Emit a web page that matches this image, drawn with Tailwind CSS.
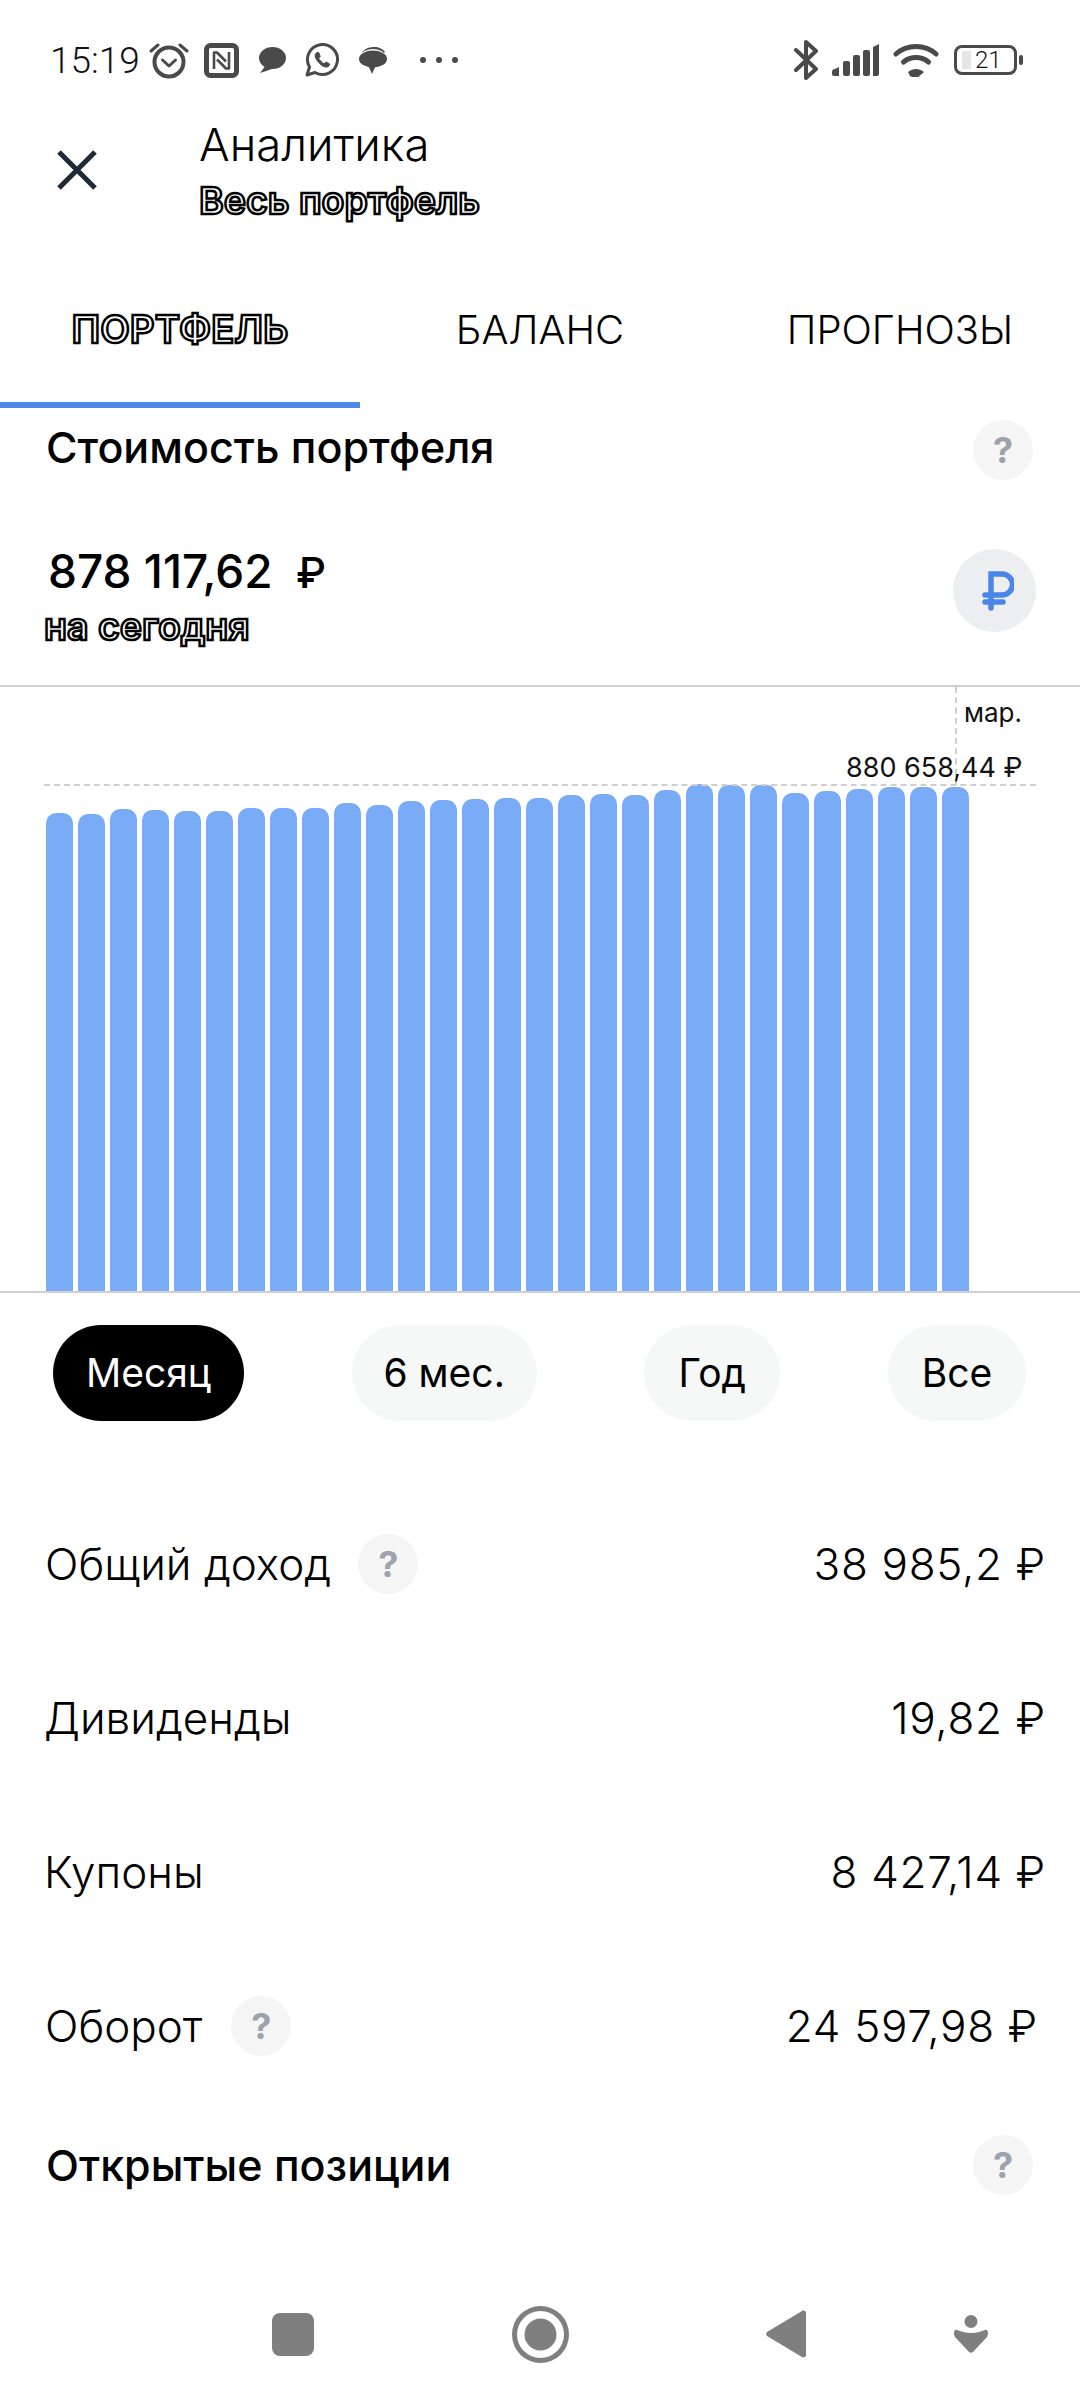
<!DOCTYPE html>
<html lang="ru">
<head>
<meta charset="utf-8">
<script src="https://cdn.jsdelivr.net/npm/@tailwindcss/browser@4"></script>
</head>
<body class="bg-white">
<div class="w-[1080px] h-[2400px] bg-white flex flex-col overflow-hidden font-['Inter','Noto_Sans',sans-serif] text-black">

  <!-- status bar -->
  <div class="h-[120px] shrink-0 flex items-center pl-[50px] text-[#4a4a4a]">
    <span class="w-[85px] text-[37px] leading-none font-light text-[#111] font-['Roboto',sans-serif]">15:19</span>
    <svg class="ml-[14px] w-[40px] h-[38px]" viewBox="0 0 40 38" fill="none" stroke="currentColor"><circle cx="20" cy="21" r="14.5" stroke-width="4"/><path d="M13.5 19l6.500 6 6.500-6" stroke-width="3" stroke-linecap="round" stroke-linejoin="round"/><path d="M2 10l7-6M38 10l-7-6" stroke-width="3" stroke-linecap="round"/></svg>
    <svg class="ml-[15px] w-[35px] h-[35px]" viewBox="0 0 35 35" fill="none" stroke="currentColor"><rect x="2.500" y="2.500" width="30" height="30" rx="4" stroke-width="5"/><path d="M10 26V9.500h3l9 9M25 9v16.500h-3l-9-9" stroke-width="2.600" stroke-linejoin="round"/></svg>
    <svg class="ml-[19px] w-[28px] h-[28px]" viewBox="0 0 28 28" fill="currentColor"><ellipse cx="14.500" cy="12" rx="13.500" ry="11"/><path d="M8 19l-6 8 12-4z"/></svg>
    <svg class="ml-[19px] w-[34px] h-[34px]" viewBox="0 0 34 34" fill="none" stroke="currentColor"><path d="M2 32l2.500-8A15 15 0 1 1 10 29.500z" stroke-width="3" stroke-linejoin="round"/><path d="M12 9.500c-2.500 1.500-2.500 4.500.500 8.500s6.500 6.500 9.500 6c2-.5 3-2 2.500-3.200l-3.500-1.800-1.800 1.800c-2-.8-4.500-3.300-5.500-5.600l1.500-1.900-1.500-3.800z" fill="currentColor"/></svg>
    <svg class="ml-[20px] w-[28px] h-[28px]" viewBox="0 0 28 28" fill="currentColor"><path d="M3 7c2-4 7-6 12-6s9 2 11 5l-1 1C22 4 18 3 14 3S6 4 3 7z"/><ellipse cx="14" cy="13" rx="14" ry="8.500"/><path d="M9 19l8 0-4 9z"/></svg>
    <div class="ml-[33px] flex gap-[10px]"><span class="w-[6px] h-[6px] rounded-full bg-[#4a4a4a]"></span><span class="w-[6px] h-[6px] rounded-full bg-[#4a4a4a]"></span><span class="w-[6px] h-[6px] rounded-full bg-[#4a4a4a]"></span></div>

    <svg class="ml-auto w-[24px] h-[40px]" viewBox="0 0 24 40" fill="none" stroke="currentColor" stroke-width="4" stroke-linecap="round" stroke-linejoin="round"><path d="M2 10l20 19-10 9V2l10 9L2 30"/></svg>
    <svg class="ml-[14px] w-[48px] h-[32px]" viewBox="0 0 48 32" fill="currentColor"><path d="M0 28a3 3 0 0 1 3-3l4-2v9H2a2 2 0 0 1-2-2z"/><rect x="11" y="17" width="7" height="15" rx="2"/><rect x="21" y="11" width="7" height="21" rx="2"/><rect x="31" y="6" width="7" height="26" rx="2"/><path d="M41 3l6-3v30a2 2 0 0 1-2 2h-4z"/></svg>
    <svg class="ml-[13px] w-[46px] h-[34px]" viewBox="0 0 46 34" fill="none" stroke="currentColor" stroke-width="5" stroke-linecap="round"><path d="M3 11C14 1 32 1 43 11"/><path d="M10.500 19c7-6 18-6 25 0"/><path d="M17 33l-2-4c5-4 11-4 16 0l-8 7z" fill="currentColor" stroke="none"/></svg>
    <div class="ml-[15px] w-[63px] h-[30px] rounded-[8px] border-[3px] border-[#4a4a4a] flex items-center pl-[5px]">
      <span class="w-[9px] h-[18px] bg-[#e5e5e5]"></span>
      <span class="ml-[4px] text-[24px] leading-none font-light text-[#111] font-['Roboto',sans-serif]">21</span>
    </div>
    <span class="ml-[2px] mr-[57px] w-[4px] h-[10px] rounded-[2px] bg-[#4a4a4a]"></span>
  </div>

  <!-- header -->
  <div class="h-[120px] shrink-0 flex">
    <svg class="ml-[57px] mt-[30px] w-[40px] h-[40px] text-[#1f2937]" viewBox="0 0 40 40" fill="none" stroke="currentColor" stroke-width="5"><path d="M2 2l36 36M38 2L2 38"/></svg>
    <div class="ml-[102px] flex flex-col">
      <span class="text-[45.500px] leading-[50px] font-light">Аналитика</span>
      <span class="mt-[9px] text-[37.500px] leading-[44px] font-semibold text-white [-webkit-text-stroke:2.500px_black]">Весь портфель</span>
    </div>
  </div>

  <!-- tabs -->
  <div class="h-[168px] shrink-0 grid grid-cols-3 text-[40px]">
    <div class="flex items-center justify-center pt-[18px] border-b-[6px] border-[#4f8ae6]"><span class="text-[38.500px] font-semibold text-white [-webkit-text-stroke:2.500px_black]">ПОРТФЕЛЬ</span></div>
    <div class="flex items-center justify-center pt-[18px] border-b-[6px] border-transparent font-light">БАЛАНС</div>
    <div class="flex items-center justify-center pt-[18px] border-b-[6px] border-transparent font-light">ПРОГНОЗЫ</div>
  </div>

  <!-- title -->
  <div class="h-[78px] shrink-0 flex items-center justify-between pl-[46px] pr-[47px]">
    <span class="text-[43px] leading-none font-medium">Стоимость портфеля</span>
    <span class="mt-[6px] w-[60px] h-[60px] rounded-full bg-[#f5f5f6] flex items-center justify-center text-[36px] font-bold text-[#9ca3af]">?</span>
  </div>

  <!-- value -->
  <div class="h-[199px] shrink-0 flex justify-between pr-[44px]">
    <div class="flex flex-col pl-[48px] pt-[60px]">
      <span class="text-[46px] leading-[50px] font-medium">878 117,62&nbsp;<span class="text-[42px]"> ₽</span></span>
      <span class="mt-[9px] -ml-[4px] text-[37.500px] leading-[40px] font-semibold text-white [-webkit-text-stroke:2.500px_black]">на сегодня</span>
    </div>
    <span class="mt-[63px] w-[83px] h-[83px] rounded-full bg-[#eceef0] flex items-center justify-center">
      <svg class="w-[32px] h-[40px] ml-[7px]" viewBox="0 0 32 40" fill="none" stroke="#4a86e8" stroke-width="5.500" stroke-linecap="round"><path d="M9 37V3h11a10.500 10.500 0 0 1 0 21H3M3 31h18"/></svg>
    </span>
  </div>

  <!-- chart -->
  <div class="relative h-[608px] shrink-0 border-y-2 border-[#d0d0d0] flex items-end gap-[5px] pl-[46px]">
    <div class="w-[27px] rounded-t-[10px] bg-[#7aabf7]" style="height:478px"></div>
    <div class="w-[27px] rounded-t-[10px] bg-[#7aabf7]" style="height:477px"></div>
    <div class="w-[27px] rounded-t-[10px] bg-[#7aabf7]" style="height:482px"></div>
    <div class="w-[27px] rounded-t-[10px] bg-[#7aabf7]" style="height:481px"></div>
    <div class="w-[27px] rounded-t-[10px] bg-[#7aabf7]" style="height:480px"></div>
    <div class="w-[27px] rounded-t-[10px] bg-[#7aabf7]" style="height:480px"></div>
    <div class="w-[27px] rounded-t-[10px] bg-[#7aabf7]" style="height:483px"></div>
    <div class="w-[27px] rounded-t-[10px] bg-[#7aabf7]" style="height:483px"></div>
    <div class="w-[27px] rounded-t-[10px] bg-[#7aabf7]" style="height:483px"></div>
    <div class="w-[27px] rounded-t-[10px] bg-[#7aabf7]" style="height:488px"></div>
    <div class="w-[27px] rounded-t-[10px] bg-[#7aabf7]" style="height:486px"></div>
    <div class="w-[27px] rounded-t-[10px] bg-[#7aabf7]" style="height:490px"></div>
    <div class="w-[27px] rounded-t-[10px] bg-[#7aabf7]" style="height:491px"></div>
    <div class="w-[27px] rounded-t-[10px] bg-[#7aabf7]" style="height:492px"></div>
    <div class="w-[27px] rounded-t-[10px] bg-[#7aabf7]" style="height:493px"></div>
    <div class="w-[27px] rounded-t-[10px] bg-[#7aabf7]" style="height:493px"></div>
    <div class="w-[27px] rounded-t-[10px] bg-[#7aabf7]" style="height:496px"></div>
    <div class="w-[27px] rounded-t-[10px] bg-[#7aabf7]" style="height:497px"></div>
    <div class="w-[27px] rounded-t-[10px] bg-[#7aabf7]" style="height:496px"></div>
    <div class="w-[27px] rounded-t-[10px] bg-[#7aabf7]" style="height:501px"></div>
    <div class="w-[27px] rounded-t-[10px] bg-[#7aabf7]" style="height:507px"></div>
    <div class="w-[27px] rounded-t-[10px] bg-[#7aabf7]" style="height:506px"></div>
    <div class="w-[27px] rounded-t-[10px] bg-[#7aabf7]" style="height:506px"></div>
    <div class="w-[27px] rounded-t-[10px] bg-[#7aabf7]" style="height:498px"></div>
    <div class="w-[27px] rounded-t-[10px] bg-[#7aabf7]" style="height:500px"></div>
    <div class="w-[27px] rounded-t-[10px] bg-[#7aabf7]" style="height:502px"></div>
    <div class="w-[27px] rounded-t-[10px] bg-[#7aabf7]" style="height:504px"></div>
    <div class="w-[27px] rounded-t-[10px] bg-[#7aabf7]" style="height:504px"></div>
    <div class="w-[27px] rounded-t-[10px] bg-[#7aabf7]" style="height:504px"></div>
    <span class="absolute left-[44px] top-[97px] w-[992px] border-t-2 border-dashed border-[#cfcfcf]"></span>
    <span class="absolute left-[955px] top-0 h-[98px] border-l-2 border-dashed border-[#cfcfcf]"></span>
    <span class="absolute left-[964px] top-[11px] text-[26px] leading-[30px] text-[#111]">мар.</span>
    <span class="absolute left-[846px] top-[66px] text-[27px] leading-[30px] text-[#111]">880 658,44 ₽</span>
  </div>

  <!-- period chips -->
  <div class="mt-[32px] shrink-0 flex justify-between pl-[53px] pr-[54px] text-[39px]">
    <span class="w-[191px] h-[96px] rounded-full bg-black text-white flex items-center justify-center">Месяц</span>
    <span class="w-[185px] h-[96px] rounded-full bg-[#f6f8f7] flex items-center justify-center">6 мес.</span>
    <span class="w-[136px] h-[96px] rounded-full bg-[#f6f8f7] flex items-center justify-center">Год</span>
    <span class="w-[138px] h-[96px] rounded-full bg-[#f6f8f7] flex items-center justify-center">Все</span>
  </div>

  <!-- stats -->
  <div class="mt-[66px] shrink-0 flex flex-col text-[44px] font-light">
    <div class="h-[154px] flex items-center pl-[45px] pr-[34px]">
      <span>Общий доход</span>
      <span class="ml-[27px] w-[60px] h-[60px] rounded-full bg-[#f5f5f6] flex items-center justify-center text-[36px] font-bold text-[#9ca3af]">?</span>
      <span class="ml-auto tracking-[0.7px]">38 985,2 ₽</span>
    </div>
    <div class="h-[154px] flex items-center justify-between pl-[44px] pr-[34px]">
      <span>Дивиденды</span>
      <span class="tracking-[0.7px]">19,82 ₽</span>
    </div>
    <div class="h-[154px] flex items-center justify-between pl-[44px] pr-[34px]">
      <span>Купоны</span>
      <span class="tracking-[0.7px]">8 427,14 ₽</span>
    </div>
    <div class="h-[154px] flex items-center pl-[45px] pr-[42px]">
      <span>Оборот</span>
      <span class="ml-[29px] w-[60px] h-[60px] rounded-full bg-[#f5f5f6] flex items-center justify-center text-[36px] font-bold text-[#9ca3af]">?</span>
      <span class="ml-auto tracking-[0.7px]">24 597,98 ₽</span>
    </div>
  </div>

  <!-- open positions -->
  <div class="h-[124px] shrink-0 flex items-center justify-between pl-[46px] pr-[47px]">
    <span class="text-[43px] leading-none font-medium">Открытые позиции</span>
    <span class="w-[60px] h-[60px] rounded-full bg-[#f5f5f6] flex items-center justify-center text-[36px] font-bold text-[#9ca3af]">?</span>
  </div>

  <!-- nav -->
  <div class="mt-auto h-[132px] shrink-0 flex items-center text-[#7f7f7f]">
    <span class="ml-[272px] w-[42px] h-[43px] rounded-[8px] bg-[#7f7f7f]"></span>
    <svg class="ml-[198px] w-[57px] h-[57px]" viewBox="0 0 57 57" fill="currentColor"><path fill-rule="evenodd" d="M28.500 0a28.500 28.500 0 1 1 0 57a28.500 28.500 0 0 1 0-57zm0 5a23.500 23.500 0 1 0 0 47a23.500 23.500 0 0 0 0-47z"/><circle cx="28.500" cy="28.500" r="16"/></svg>
    <svg class="ml-[197px] w-[40px] h-[48px]" viewBox="0 0 40 48" fill="currentColor"><path d="M1 22L36 1c2-1 4 0 4 2v42c0 2-2 3-4 2L1 26c-1-1-1-3 0-4z"/></svg>
    <svg class="ml-[148px] w-[34px] h-[38px]" viewBox="0 0 34 38" fill="currentColor"><ellipse cx="17" cy="6.500" rx="6.500" ry="6.500"/><path d="M3 15c5 2 9 3 14 3s9-1 14-3c2-1 3 1 3 3 0 1-.5 3-1 4L19 37c-1 1-3 1-4 0L1 22c-.5-1-1-3-1-4 0-2 1-4 3-3z"/></svg>
  </div>
</div>
</body>
</html>
